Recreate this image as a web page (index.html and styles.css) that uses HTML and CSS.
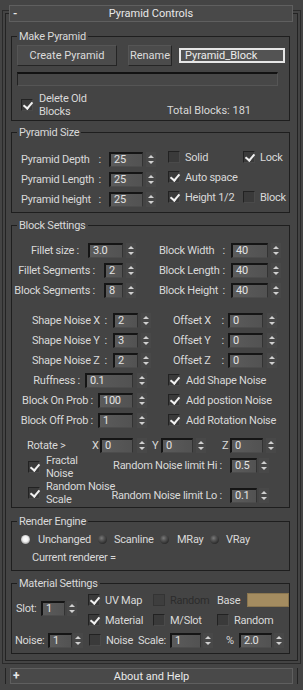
FILE: index.html
```html
<!DOCTYPE html>
<html>
<head>
<meta charset="utf-8">
<link rel="stylesheet" href="styles.css">
</head>
<body>
<div class="rollout">
  <div class="rollhead"><span class="sign">-</span><span class="title">Pyramid Controls</span><span></span></div>
  <div class="rollbody">

    <fieldset class="grp g-make">
      <legend>Make Pyramid</legend>
      <div class="make">
        <div class="make-row">
          <div class="btn b-create">Create Pyramid</div>
          <div class="btn b-rename">Rename</div>
          <div class="tf">Pyramid_Block</div>
        </div>
        <div class="prog"></div>
        <div class="make-bottom">
          <div class="chk del"><span class="cb on"></span><span>Delete Old<br>Blocks</span></div>
          <span class="total">Total Blocks: 181</span>
        </div>
      </div>
    </fieldset>

    <fieldset class="grp g-size">
      <legend>Pyramid Size</legend>
      <div class="size">
        <div class="size-left">
          <div class="r20"><span class="lbl l-pyr"><span>Pyramid Depth</span><span>:</span></span><span class="f f-pyr">25</span><span class="sp"><i></i><i></i></span></div>
          <div class="r20"><span class="lbl l-pyr"><span>Pyramid Length</span><span>:</span></span><span class="f f-pyr">25</span><span class="sp"><i></i><i></i></span></div>
          <div class="r20"><span class="lbl l-pyr"><span>Pyramid height</span><span>:</span></span><span class="f f-pyr">25</span><span class="sp"><i></i><i></i></span></div>
        </div>
        <div class="size-right">
          <div class="chk"><span class="cb"></span>Solid</div>
          <div class="chk"><span class="cb on"></span>Lock</div>
          <div class="chk span2"><span class="cb on"></span>Auto space</div>
          <div class="chk"><span class="cb on"></span>Height 1/2</div>
          <div class="chk"><span class="cb"></span>Block</div>
        </div>
      </div>
    </fieldset>

    <fieldset class="grp g-block">
      <legend>Block Settings</legend>
      <div class="block">
        <div class="bs bs-a">
          <div class="col-l a-l">
            <div class="r20"><span class="t">Fillet size :</span><span class="f f-35">3.0</span><span class="sp"><i></i><i></i></span></div>
            <div class="r20"><span class="t">Fillet Segments :</span><span class="f f-19">2</span><span class="sp"><i></i><i></i></span></div>
            <div class="r20"><span class="t">Block Segments :</span><span class="f f-19">8</span><span class="sp"><i></i><i></i></span></div>
          </div>
          <div class="col-r a-r">
            <div class="r20"><span class="lbl l-bw"><span>Block Width</span><span>:</span></span><span class="f f-37">40</span><span class="sp"><i></i><i></i></span></div>
            <div class="r20"><span class="lbl l-bw"><span>Block Length</span><span>:</span></span><span class="f f-37">40</span><span class="sp"><i></i><i></i></span></div>
            <div class="r20"><span class="lbl l-bw"><span>Block Height</span><span>:</span></span><span class="f f-37">40</span><span class="sp"><i></i><i></i></span></div>
          </div>
        </div>

        <div class="bs bs-b">
          <div class="col-l b-l">
            <div class="r20"><span class="lbl l-sn"><span>Shape Noise X</span><span>:</span></span><span class="f f-25">2</span><span class="sp"><i></i><i></i></span></div>
            <div class="r20"><span class="lbl l-sn"><span>Shape Noise Y</span><span>:</span></span><span class="f f-25">3</span><span class="sp"><i></i><i></i></span></div>
            <div class="r20"><span class="lbl l-sn"><span>Shape Noise Z</span><span>:</span></span><span class="f f-25">2</span><span class="sp"><i></i><i></i></span></div>
          </div>
          <div class="col-r b-r">
            <div class="r20"><span class="lbl l-off"><span>Offset X</span><span>:</span></span><span class="f f-35">0</span><span class="sp sp4"><i></i><i></i></span></div>
            <div class="r20"><span class="lbl l-off"><span>Offset Y</span><span>:</span></span><span class="f f-35">0</span><span class="sp sp4"><i></i><i></i></span></div>
            <div class="r20"><span class="lbl l-off"><span>Offset Z</span><span>:</span></span><span class="f f-35">0</span><span class="sp sp4"><i></i><i></i></span></div>
          </div>
        </div>

        <div class="bs bs-c">
          <div class="col-l c-l">
            <div class="r20"><span class="t">Ruffness :</span><span class="f f-48">0.1</span><span class="sp sp4"><i></i><i></i></span></div>
            <div class="r20"><span class="t">Block On Prob :</span><span class="f f-35">100</span><span class="sp sp4"><i></i><i></i></span></div>
            <div class="r20"><span class="t">Block Off Prob :</span><span class="f f-35">1</span><span class="sp sp4"><i></i><i></i></span></div>
          </div>
          <div class="col-r c-r">
            <div class="r20 chk gap6"><span class="cb on"></span>Add Shape Noise</div>
            <div class="r20 chk gap6"><span class="cb on"></span>Add postion Noise</div>
            <div class="r20 chk gap6"><span class="cb on"></span>Add Rotation Noise</div>
          </div>
        </div>

        <div class="rot">
          <span class="rot-l">Rotate &gt;</span>
          <span class="ax ax-x">X</span><span class="f f-33">0</span><span class="sp sp4"><i></i><i></i></span>
          <span class="ax ax-y">Y</span><span class="f f-32">0</span><span class="sp"><i></i><i></i></span>
          <span class="ax ax-z">Z</span><span class="f f-33">0</span><span class="sp"><i></i><i></i></span>
        </div>

        <div class="bs bs-d">
          <div class="d-l">
            <div class="chk two gap6"><span class="cb on"></span><span>Fractal<br>Noise</span></div>
            <div class="chk two gap6"><span class="cb on"></span><span>Random Noise<br>Scale</span></div>
          </div>
          <div class="d-r">
            <div class="r20 lim lim-hi"><span class="t">Random Noise limit Hi :</span><span class="f f-27">0.5</span><span class="sp sp2"><i></i><i></i></span></div>
            <div class="r20 lim lim-lo"><span class="t">Random Noise limit Lo :</span><span class="f f-27">0.1</span><span class="sp sp2"><i></i><i></i></span></div>
          </div>
        </div>
      </div>
    </fieldset>

    <fieldset class="grp g-render">
      <legend>Render Engine</legend>
      <div class="render">
        <div class="radios">
          <div class="rad r1"><span class="rd on"></span>Unchanged</div>
          <div class="rad r2"><span class="rd"></span>Scanline</div>
          <div class="rad r3"><span class="rd"></span>MRay</div>
          <div class="rad r4"><span class="rd"></span>VRay</div>
        </div>
        <div class="cur">Current renderer =</div>
      </div>
    </fieldset>

    <fieldset class="grp g-mat">
      <legend>Material Settings</legend>
      <div class="mat">
        <div class="mat-top">
          <div class="slot"><span class="t">Slot:</span><span class="f f-24">1</span><span class="sp sp2"><i></i><i></i></span></div>
          <div class="mat-rows">
            <div class="mrow">
              <div class="chk mc1"><span class="cb on"></span>UV Map</div>
              <div class="chk mc2 dis"><span class="cb"></span>Random</div>
              <div class="base"><span>Base</span><span class="swatch"></span></div>
            </div>
            <div class="mrow">
              <div class="chk mc1"><span class="cb on"></span>Material</div>
              <div class="chk mc2"><span class="cb"></span>M/Slot</div>
              <div class="chk mc3"><span class="cb"></span>Random</div>
            </div>
          </div>
        </div>
        <div class="mrow m3">
          <span class="t n-l">Noise:</span><span class="f f-24">1</span><span class="sp sp1"><i></i><i></i></span>
          <div class="chk n-c"><span class="cb"></span>Noise</div>
          <span class="t sc-l">Scale:</span><span class="f f-31">1</span><span class="sp sp2"><i></i><i></i></span>
          <span class="t pc-l">%</span><span class="f f-33">2.0</span><span class="sp sp2"><i></i><i></i></span>
        </div>
      </div>
    </fieldset>

  </div>
</div>

<div class="about">
  <div class="rollhead about-head"><span class="sign plus">+</span><span class="title">About and Help</span><span></span></div>
</div>
</body>
</html>
```

FILE: styles.css
```css
* { box-sizing: border-box; }

body {
  margin: 0;
  width: 303px;
  height: 690px;
  overflow: hidden;
  background: #444444;
  color: #d9d9d9;
  font-family: Roboto, "Liberation Sans", sans-serif;
  font-size: 11px;
  line-height: 13px;
  letter-spacing: -0.25px;
  white-space: nowrap;
}

/* ---------- rollouts ---------- */
.rollout {
  margin: 13px 5px 0;
  border: 1px solid #232323;
  box-shadow: 0 0 0 2px #444444, 0 0 0 3px #2a2a2a;
}

.rollhead {
  margin: -9px 4px 0 3px;
  height: 17px;
  border: 1px solid #5f5f5f;
  background: #494949;
  display: grid;
  grid-template-columns: 1fr auto 1fr;
  align-items: center;
  color: #e8e8e8;
  letter-spacing: 0;
}

.sign {
  padding-left: 3px;
  font-weight: bold;
  line-height: 13px;
}

.sign.plus {
  padding-left: 2px;
  font-size: 12px;
}

.title { text-align: center; }

.rollbody {
  padding: 8px 7px 6px 5px;
}

.about {
  margin: 7px 5px 0;
  border-left: 1px solid #232323;
  border-right: 1px solid #232323;
}

.about-head {
  margin: 0 4px 0 4px;
  height: 16px;
}

/* ---------- group boxes ---------- */
.grp {
  margin: 0;
  padding: 0;
  min-width: 0;
  border: 1px solid #1e1e1e;
}

.grp legend {
  margin-left: 5px;
  padding: 0 2px;
  height: 13px;
  line-height: 13px;
}

.g-size { margin-top: 5px; }
.g-block { margin-top: 6px; }
.g-render { margin-top: 7px; }
.g-mat { margin-top: 6px; }

/* ---------- primitives ---------- */
.t { flex: none; }

.f {
  display: block;
  height: 15px;
  padding-left: 3px;
  line-height: 12px;
  color: #e2e2e2;
  background: linear-gradient(to right, #5b5b5b, #525252);
  border-top: 2px solid #151515;
  border-left: 2px solid #151515;
  border-right: 1px solid #333333;
  border-bottom: 1px solid #4c4c4c;
  flex: none;
}

.sp {
  flex: none;
  width: 10px;
  height: 15px;
  margin-left: 3px;
  display: flex;
  flex-direction: column;
  justify-content: space-between;
  align-items: center;
  padding: 3px 0 3px;
  background: #484848;
}
.sp4 { margin-left: 4px; }
.sp2 { margin-left: 2px; }
.sp1 { margin-left: 1px; }

.sp i {
  display: block;
  width: 0;
  height: 0;
  border-left: 3px solid transparent;
  border-right: 3px solid transparent;
}
.sp i:first-child { border-bottom: 3px solid #d0d0d0; }
.sp i:last-child { border-top: 3px solid #d0d0d0; }

.cb {
  position: relative;
  flex: none;
  width: 12px;
  height: 12px;
  background: #3a3a3a;
  border: 1px solid #222222;
  border-right-color: #4a4a4a;
  border-bottom-color: #4a4a4a;
}

.cb.on::after {
  content: "";
  position: absolute;
  left: 3px;
  top: 0px;
  width: 4px;
  height: 7px;
  border: solid #f0f0f0;
  border-width: 0 2px 2px 0;
  transform: rotate(40deg);
}

.chk {
  display: flex;
  align-items: center;
  gap: 5px;
}
.gap6 { gap: 6px; }

.r20 {
  height: 20px;
  display: flex;
  align-items: center;
}

.lbl {
  display: flex;
  justify-content: space-between;
  flex: none;
}

/* ---------- make pyramid ---------- */
.make {
  height: 77px;
  padding: 2px 0 0 5px;
}

.make-row {
  display: flex;
  align-items: center;
  height: 21px;
}

.btn {
  flex: none;
  height: 21px;
  display: flex;
  align-items: center;
  justify-content: center;
  background: #4b4b4b;
  border: 1px solid #555555;
  border-right-color: #252525;
  border-bottom-color: #252525;
  color: #dcdcdc;
  letter-spacing: 0;
}
.b-create { width: 100px; }
.b-rename { width: 44px; margin-left: 11px; }

.tf {
  flex: none;
  margin-left: 7px;
  width: 106px;
  height: 15px;
  padding-left: 4px;
  line-height: 11px;
  background: #535353;
  border: 2px solid #e6e6e6;
  color: #ececec;
  letter-spacing: 0;
}

.prog {
  margin-top: 6px;
  width: 261px;
  height: 14px;
  background: #474747;
  border-top: 2px solid #121212;
  border-left: 1px solid #222222;
  border-right: 1px solid #555555;
  border-bottom: 1px solid #555555;
}

.make-bottom {
  margin-top: 6px;
  height: 26px;
  display: flex;
  align-items: center;
}

.del {
  flex: none;
  width: 150px;
  padding-left: 4px;
  gap: 6px;
}

.total {
  margin-top: 10px;
  letter-spacing: 0;
}

/* ---------- pyramid size ---------- */
.size {
  height: 73px;
  display: flex;
}

.size-left {
  flex: none;
  width: 156px;
  padding: 10px 0 0 9px;
}

.l-pyr { width: 80px; }
.f-pyr { width: 34px; margin-left: 8px; }

.size-right {
  padding-top: 8px;
  display: grid;
  grid-template-columns: 75px auto;
  grid-auto-rows: 20px;
  align-items: center;
  align-content: start;
}
.span2 { grid-column: 1 / 3; }

/* ---------- block settings ---------- */
.block {
  height: 275px;
  padding-top: 8px;
}

.bs { display: flex; }
.col-l, .col-r { flex: none; }

.col-l .t { margin-right: 9px; }

.a-l { width: 124px; }
.a-l .r20 { justify-content: flex-end; }
.f-35 { width: 35px; }
.f-19 { width: 19px; }
.f-37 { width: 37px; margin-left: 6px; }
.a-r { margin-left: 23px; }
.l-bw { width: 66px; }

.bs-b { margin-top: 10px; }
.b-l { width: 139px; padding-left: 20px; }
.l-sn { width: 75px; }
.f-25 { width: 25px; margin-left: 6px; }
.b-r { margin-left: 22px; }
.l-off { width: 51px; }
.b-r .f-35 { margin-left: 4px; }

.c-l { width: 135px; }
.c-l .r20 { justify-content: flex-end; }
.c-l .t { margin-right: 5px; }
.f-48 { width: 48px; }
.c-r { margin-left: 21px; }

.rot {
  margin-top: 6px;
  height: 18px;
  padding-left: 15px;
  display: flex;
  align-items: center;
}
.rot-l { width: 65px; flex: none; }
.ax { flex: none; }
.ax-x { width: 8px; }
.ax-y { width: 9px; margin-left: 5px; }
.ax-z { width: 8px; margin-left: 16px; }
.f-33 { width: 33px; }
.f-32 { width: 32px; }

.d-l {
  flex: none;
  width: 98px;
  padding-left: 16px;
}
.two { height: 26px; }

.d-r {
  flex: none;
  width: 159px;
  display: flex;
  flex-direction: column;
  align-items: flex-end;
}
.lim .t { margin-right: 8px; }
.lim-hi { margin-top: 1px; }
.lim-lo { margin-top: 10px; }
.f-27 { width: 27px; }

/* ---------- render engine ---------- */
.render {
  height: 42px;
  padding: 3px 0 0 9px;
}

.radios {
  height: 16px;
  display: flex;
  align-items: center;
}

.rad {
  display: flex;
  align-items: center;
  flex: none;
}
.rad.r1 { width: 77px; gap: 8px; }
.rad.r2 { width: 62px; gap: 7px; }
.rad.r3 { width: 50px; gap: 8px; }
.rad.r4 { gap: 7px; }

.rd {
  flex: none;
  width: 9px;
  height: 9px;
  border-radius: 50%;
  background: radial-gradient(circle at 40% 35%, #7a7a7a 0, #555555 30%, #2e2e2e 70%, #1e1e1e 100%);
}
.rd.on {
  background: radial-gradient(circle at 50% 45%, #ffffff 0, #f2f2f2 40%, #a0a0a0 75%, #555555 100%);
}

.cur {
  margin-top: 4px;
  height: 14px;
  padding-left: 11px;
  line-height: 14px;
}

/* ---------- material settings ---------- */
.mat {
  height: 63px;
}

.mat-top {
  display: flex;
}

.slot {
  flex: none;
  width: 76px;
  padding-left: 4px;
  display: flex;
  align-items: center;
  align-self: center;
  margin-bottom: 4px;
}
.slot .t { width: 25px; }
.f-24 { width: 24px; }

.mrow {
  height: 20px;
  display: flex;
  align-items: center;
}

.mc1 { width: 65px; flex: none; }
.mc2 { width: 64px; flex: none; }
.mc3 { width: 60px; flex: none; }

.dis { color: #2c2c2c; }
.dis .cb { background: #3e3e3e; border-color: #343434; }

.base {
  display: flex;
  align-items: center;
}
.swatch {
  margin-left: 7px;
  width: 42px;
  height: 14px;
  background: #a48c60;
  border: 1px solid #8a7650;
}

.m3 { padding-left: 3px; }
.n-l { width: 33px; flex: none; }
.n-c { margin-left: 6px; width: 49px; flex: none; }
.sc-l { width: 32px; flex: none; }
.f-31 { width: 31px; }
.pc-l { margin-left: 13px; width: 13px; flex: none; }
```
